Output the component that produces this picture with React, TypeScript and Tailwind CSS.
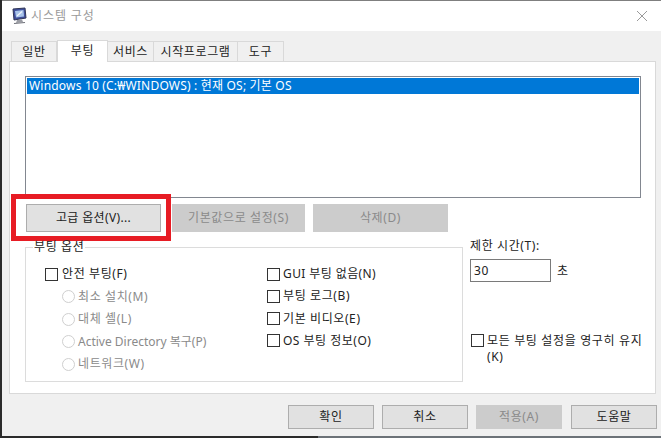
import React from 'react';

const font = "font-['Noto_Sans','Noto_Sans_CJK_KR',sans-serif]";

const tabs = [
  { label: '일반', width: 'w-[46px]' },
  { label: '부팅', width: 'w-[51px]', active: true },
  { label: '서비스', width: 'w-[46px]' },
  { label: '시작프로그램', width: 'w-[84px]' },
  { label: '도구', width: 'w-[46px]' },
];

const safeBootOptions = [
  { label: '최소 설치(M)', tracking: '' },
  { label: '대체 셸(L)', tracking: '' },
  { label: 'Active Directory 복구(P)', tracking: 'tracking-normal' },
  { label: '네트워크(W)', tracking: '' },
];
const bootFlags = [
  { label: 'GUI 부팅 없음(N)', tracking: 'tracking-[0.4px]' },
  { label: '부팅 로그(B)', tracking: '' },
  { label: '기본 비디오(E)', tracking: '' },
  { label: 'OS 부팅 정보(O)', tracking: 'tracking-[0.5px]' },
];

const CheckBox = () => <span className="block h-[13px] w-[13px] shrink-0 border border-[#333] bg-white" />;

const Radio = () => <span className="block h-[13px] w-[13px] shrink-0 rounded-full border border-[#cfcfcf] bg-white" />;

const Button = ({ label, disabled, className }: { label: string; disabled?: boolean; className: string }) => (
  <div
    className={`flex items-center justify-center border text-[12px] ${
      disabled ? 'border-[#cccccc] bg-[#cccccc] text-[#8a8a8a]' : 'border-[#adadad] bg-[#e1e1e1] text-[#222]'
    } ${className}`}
  >
    {label}
  </div>
);

const SystemIcon = () => (
  <svg width="18" height="18" viewBox="0 0 18 18" className="shrink-0">
    <path d="M2 2 L14 1 L15 11 L3 13 Z" fill="#3f4f9c" stroke="#2f3555" strokeWidth="1" />
    <path d="M4 4 L12.5 3 L13 9.5 L5 10.5 Z" fill="#a9c4ea" />
    <path d="M6 9 L11 4.5" stroke="#f2f6fc" strokeWidth="1.2" />
    <path d="M6 13 L11 12.5 L12 15 L5 16 Z" fill="#9a9ca3" />
    <path d="M3 16.5 L14 15.5" stroke="#6d6f78" strokeWidth="1.2" />
  </svg>
);

export default function App() {
  return (
    <div className={`flex h-[438px] w-[663px] flex-col overflow-hidden bg-white text-[12px] leading-none tracking-[0.6px] text-[#222] ${font}`}>
      <div className="flex h-[436px] shrink-0">
        <div className="w-[2px] shrink-0 bg-[#2b2b2b]" />
        <div className="flex w-[659px] shrink-0 flex-col border-t border-[#7f7f7f] bg-[#f0f0f0]">
          {/* title bar */}
          <div className="flex h-[30px] shrink-0 items-center bg-white pl-[9px] pr-[13px]">
            <SystemIcon />
            <span className="ml-[2px] text-[12px] tracking-[0.9px] text-[#9a9a9a]">시스템 구성</span>
            <svg width="12" height="12" viewBox="0 0 12 12" className="ml-auto">
              <path d="M1 1 L11 11 M11 1 L1 11" stroke="#9a9a9a" strokeWidth="1" />
            </svg>
          </div>

          {/* tabs */}
          <div className="flex h-[30px] shrink-0 items-end pl-[9px]">
            {tabs.map((tab) =>
              tab.active ? (
                <div
                  key={tab.label}
                  className={`relative z-10 -mb-px flex h-[22px] items-start justify-center border border-b-0 border-[#d9d9d9] bg-white pt-[4px] ${tab.width}`}
                >
                  {tab.label}
                </div>
              ) : (
                <div
                  key={tab.label}
                  className={`flex h-[20px] items-center justify-center border border-b-0 border-l-0 border-[#d9d9d9] bg-[#f0f0f0] first:border-l ${tab.width}`}
                >
                  {tab.label}
                </div>
              ),
            )}
          </div>

          {/* panel */}
          <div className="relative ml-[7px] flex h-[333px] w-[647px] shrink-0 flex-col border border-[#d9d9d9] bg-white pl-[15px] pt-[14px]">
            <div className="h-[122px] w-[616px] shrink-0 border border-[#828790] bg-white p-px">
              <div className="flex h-[16px] items-center bg-[#0078d7] pl-[2px] tracking-[0.19px] text-white">
                Windows 10 (C:₩WINDOWS) : 현재 OS; 기본 OS
              </div>
            </div>

            <div className="mt-[6px] flex shrink-0">
              <Button label="고급 옵션(V)..." className="ml-px h-[28px] w-[135px] tracking-[0.35px]" />
              <Button label="기본값으로 설정(S)" disabled className="ml-[11px] h-[28px] w-[133px]" />
              <Button label="삭제(D)" disabled className="ml-[8px] h-[28px] w-[135px]" />
            </div>

            {/* red highlight drawn over the screenshot */}
            <div className="absolute left-[1px] top-[132px] h-[47px] w-[160px] border-[5px] border-[#e71c24]" />

            <div className="mt-[15px] flex shrink-0">
              <div className="relative grid h-[135px] w-[438px] shrink-0 grid-cols-[222px_1fr] border border-[#dcdcdc] pl-[19px] pt-[19px]">
                <span className="absolute left-[7px] top-[-7px] bg-white px-[1px]">부팅 옵션</span>
                <div className="flex flex-col">
                  <div className="flex h-[14px] items-center gap-[4px]">
                    <CheckBox />
                    <span>안전 부팅(F)</span>
                  </div>
                  {safeBootOptions.map((option) => (
                    <div key={option.label} className="mt-[8.5px] flex h-[14px] items-center gap-[3px] pl-[17px] text-[#8a8a8a]">
                      <Radio />
                      <span className={option.tracking}>{option.label}</span>
                    </div>
                  ))}
                </div>
                <div className="flex flex-col">
                  {bootFlags.map((flag, i) => (
                    <div key={flag.label} className={`flex h-[14px] items-center gap-[3px] ${i > 0 ? 'mt-[8.33px]' : ''}`}>
                      <CheckBox />
                      <span className={flag.tracking}>{flag.label}</span>
                    </div>
                  ))}
                </div>
              </div>

              <div className="ml-[7px] flex flex-col">
                <span className="-mt-[7px]">제한 시간(T):</span>
                <div className="mt-[7px] flex items-center">
                  <div className="flex h-[23px] w-[81px] items-center border border-[#7a7a7a] bg-white pl-[3px]">30</div>
                  <span className="ml-[6px]">초</span>
                </div>
                <div className="mt-[52px] flex gap-[3px] pl-px">
                  <CheckBox />
                  <span className="-mt-[1px] w-[170px] leading-[16px] tracking-[0.65px]">
                    모든 부팅 설정을 영구히 유지
                    <br />
                    (K)
                  </span>
                </div>
              </div>
            </div>
          </div>

          {/* dialog buttons */}
          <div className="mt-[11px] flex shrink-0 pl-[286px]">
            <Button label="확인" className="h-[24px] w-[86px]" />
            <Button label="취소" className="ml-[8px] h-[24px] w-[86px]" />
            <Button label="적용(A)" disabled className="ml-[8px] h-[24px] w-[86px]" />
            <Button label="도움말" className="ml-[9px] h-[24px] w-[86px]" />
          </div>
        </div>
      </div>
      <div className="flex h-[2px] shrink-0">
        <div className="w-[318px] bg-[#2b2b2b]" />
        <div className="w-[343px] bg-[#6c7278]" />
      </div>
    </div>
  );
}
